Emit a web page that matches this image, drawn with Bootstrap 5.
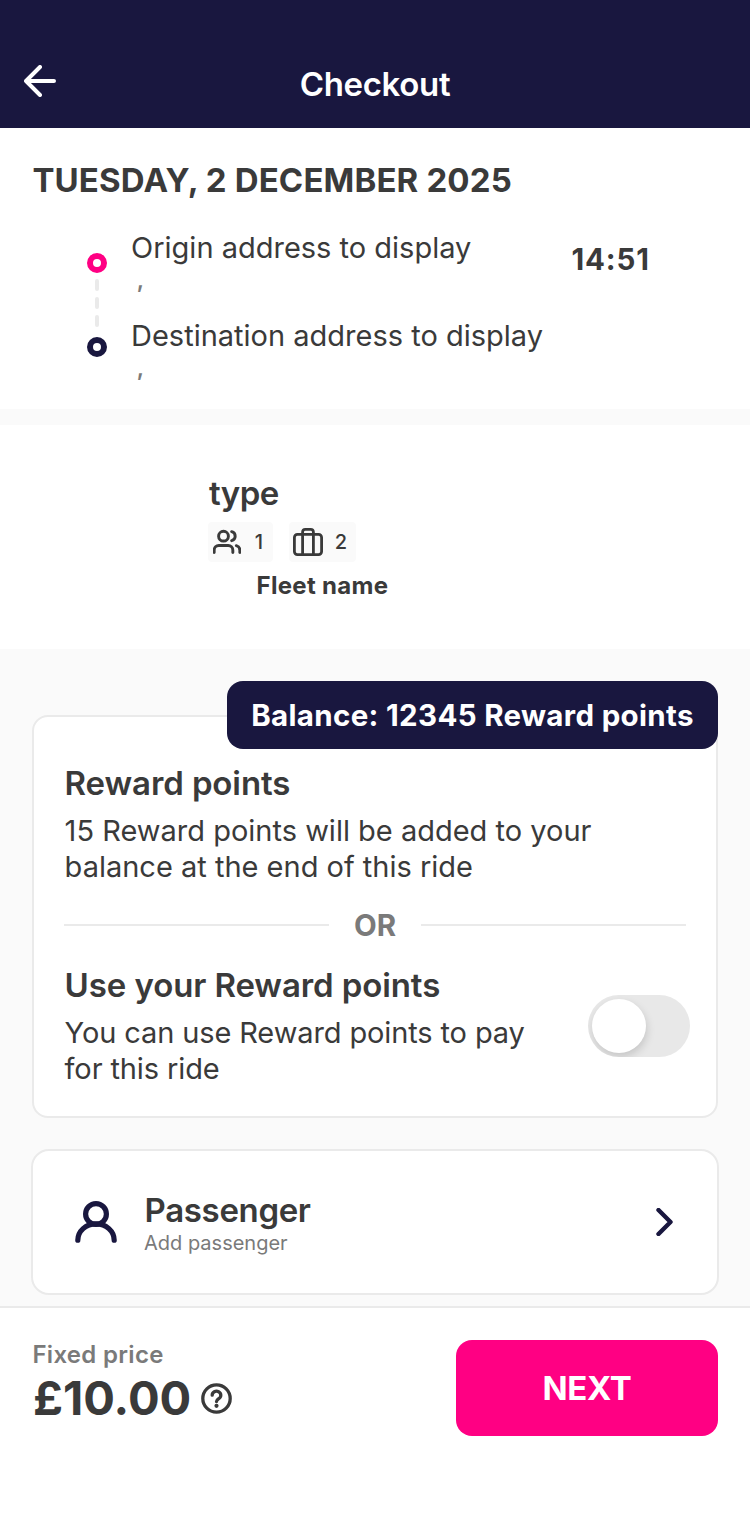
<!DOCTYPE html>
<html lang="en">
<head>
<meta charset="utf-8">
<meta name="viewport" content="width=device-width, initial-scale=1">
<title>Checkout</title>
<link href="https://cdn.jsdelivr.net/npm/bootstrap@5.3.0/dist/css/bootstrap.min.css" rel="stylesheet">
<style>
  :root { --navy: #19173f; --pink: #ff0083; --ink: #3a3a3a; --muted: #7a7a7a; --line: #eaeaea; --soft: #fafafa; }
  body { font-family: Inter, "Liberation Sans", sans-serif; color: var(--ink); background: var(--soft); height: 1536px; overflow: hidden; }
  svg { display: block; flex: none; }
  .topbar { height: 128px; background: var(--navy); padding: 40px 24px 0; display: grid; grid-template-columns: 32px 1fr 32px; }
  .topbar svg { margin-top: 25px; }
  .topbar h1 { font-size: 33px; line-height: 88px; font-weight: 600; letter-spacing: -.35px; }
  .trip { height: 281px; padding: 32px 33px 0; }
  .trip h2 { font-size: 33px; line-height: 40px; font-weight: 700; letter-spacing: .14px; margin: 0 0 0 -.6px; }
  .route { padding: 29px 67px 0 54px; }
  .rail { width: 20px; margin: 24px 24px 0 0; }
  .stops { padding-top: 1px; }
  .address { font-size: 29px; line-height: 36px; }
  .address-sub { font-size: 23px; line-height: 28px; height: 52px; color: var(--muted); white-space: pre; font-weight: 600; }
  .clock { font-size: 29.5px; line-height: 36px; font-weight: 700; letter-spacing: .9px; margin: 12px 0 0; }
  .vehicle { height: 224px; margin-top: 16px; padding: 48px 0 0 208px; }
  .vehicle h3 { font-size: 33px; line-height: 40px; font-weight: 600; letter-spacing: -.5px; padding-left: 1px; }
  .chips { margin-top: 9px; }
  .chip { height: 40px; background: var(--soft); border-radius: 4px; font-size: 20px; font-weight: 500; }
  .chip-seats { width: 65px; padding: 0 10px 0 5px; }
  .chip-bags { width: 67px; padding: 0 9px 0 4px; }
  .fleet { font-size: 24px; line-height: 30px; font-weight: 700; margin: 9px 0 0 48.5px; letter-spacing: .3px; }
  .rewards { margin: 66px 32px 0; height: 403px; border: 2px solid var(--line); border-radius: 16px; padding: 46px 30px 0; }
  .balance { top: -36px; right: -2px; width: 491px; height: 68px; border-radius: 16px; background: var(--navy); font-size: 29.5px; font-weight: 700; line-height: 68px; letter-spacing: .33px; }
  .card-head { font-size: 33px; line-height: 40px; font-weight: 600; letter-spacing: -.1px; padding-left: .6px; }
  .copy { font-size: 29px; line-height: 36px; margin-top: 10px; padding-left: .6px; }
  .copy-tight { letter-spacing: -.12px; }
  .divider { height: 36px; margin: 22px 0; font-size: 29.5px; font-weight: 700; color: var(--muted); }
  .divider i { height: 2px; background: var(--line); width: 265px; }
  .toggle { width: 102px; height: 62px; border-radius: 31px; background: #e8e8e8; padding: 4px; margin: 30px -4px 0 0; overflow: hidden; border: 0; }
  .knob { width: 54px; height: 54px; border-radius: 50%; background: #fff; box-shadow: 1px 4px 8px rgba(0,0,0,.15); }
  .passenger { margin: 31px 31px 0; height: 146px; border: 2px solid var(--line); border-radius: 18px; padding: 0 44.5px 0 42px; }
  .passenger .who { margin-left: 27px; padding-top: 2px; }
  .passenger .card-head { letter-spacing: -.35px; }
  .passenger .sub { font-size: 20px; line-height: 26px; color: var(--muted); }
  .footer { height: 230px; margin-top: 11px; border-top: 2px solid var(--line); padding: 32px 32px 0 33px; }
  .fixed { font-size: 24px; line-height: 30px; font-weight: 600; color: var(--muted); letter-spacing: .3px; margin-left: -.6px; }
  .price { font-size: 47px; line-height: 56px; font-weight: 700; }
  .help { margin-left: 10px; }
  .next { width: 262px; height: 96px; border-radius: 16px; background: var(--pink); color: #fff; font-size: 33px; font-weight: 700; letter-spacing: -.3px; padding: 2px 0 0; }
  .next:hover { background: var(--pink); color: #fff; }
</style>
</head>
<body>
<header class="topbar text-white">
  <svg width="32" height="32" fill="none" stroke="#fff" stroke-width="4" stroke-linecap="round" stroke-linejoin="round"><path d="M16 2 2 16 16 30M2 16H30"/></svg>
  <h1 class="m-0 text-center">Checkout</h1>
</header>
<section class="trip bg-white">
  <h2>TUESDAY, 2 DECEMBER 2025</h2>
  <div class="route d-flex">
    <svg class="rail" width="20" height="106" viewBox="0 0 20 106" fill="none"><circle cx="10" cy="10" r="7" stroke="#ff0083" stroke-width="6"/><path d="M10 28v8M10 46v8M10 64v8" stroke="#eaeaea" stroke-width="4" stroke-linecap="round"/><circle cx="10" cy="94" r="7" stroke="#19173f" stroke-width="6"/></svg>
    <div class="stops flex-grow-1">
      <div class="address">Origin address to display</div>
      <div class="address-sub"> ,</div>
      <div class="address">Destination address to display</div>
      <div class="address-sub"> ,</div>
    </div>
    <div class="clock">14:51</div>
  </div>
</section>
<section class="vehicle bg-white">
  <h3 class="m-0">type</h3>
  <div class="chips d-flex gap-3">
    <div class="chip chip-seats d-flex align-items-center justify-content-between"><svg width="28" height="28" viewBox="0 0 24 24" fill="none" stroke="#3a3a3a" stroke-width="2.5" stroke-linecap="round"><path d="M17 21v-2a4 4 0 0 0-4-4H5a4 4 0 0 0-4 4v2M23 21v-2a4 4 0 0 0-3-3.87M16 3.13a4 4 0 0 1 0 7.75"/><circle cx="9" cy="7" r="4.2"/></svg><span>1</span></div>
    <div class="chip chip-bags d-flex align-items-center justify-content-between"><svg width="30" height="28" fill="none" stroke="#3a3a3a" stroke-width="2.8"><rect x="1.4" y="6.4" width="27.2" height="20.2" rx="3"/><path d="M9.6 26.5V4a2.7 2.7 0 0 1 2.7-2.6h5.4A2.7 2.7 0 0 1 20.4 4v22.5"/></svg><span>2</span></div>
  </div>
  <div class="fleet">Fleet name</div>
</section>
<section class="rewards bg-white position-relative">
  <div class="balance position-absolute text-white text-center">Balance: 12345 Reward points</div>
  <div class="card-head">Reward points</div>
  <div class="copy">15 Reward points will be added to your<br>balance at the end of this ride</div>
  <div class="divider d-flex align-items-center justify-content-between"><i></i><span>OR</span><i></i></div>
  <div class="d-flex justify-content-between">
    <div>
      <div class="card-head">Use your Reward points</div>
      <div class="copy copy-tight">You can use Reward points to pay<br>for this ride</div>
    </div>
    <button type="button" role="switch" aria-checked="false" class="toggle" aria-label="Use your Reward points"><span class="knob d-block"></span></button>
  </div>
</section>
<section class="passenger bg-white d-flex align-items-center">
  <svg width="42" height="42" fill="none" stroke="#19173f" stroke-width="5.2" stroke-linecap="round"><circle cx="21" cy="13" r="10.4"/><path d="M2.8 39.2a18.2 16.4 0 0 1 36.4 0"/></svg>
  <div class="who flex-grow-1">
    <div class="card-head">Passenger</div>
    <div class="sub">Add passenger</div>
  </div>
  <svg width="17" height="28" fill="none" stroke="#19173f" stroke-width="4.4" stroke-linecap="round" stroke-linejoin="round"><path d="m2.5 2 12 12-12 12"/></svg>
</section>
<footer class="footer bg-white d-flex justify-content-between">
  <div>
    <div class="fixed">Fixed price</div>
    <div class="d-flex align-items-center">
      <div class="price">£10.00</div>
      <svg class="help" width="31" height="31" viewBox="0 0 31 31" fill="none" stroke="#3a3a3a" stroke-width="3.3"><circle cx="15.5" cy="15.5" r="13.7"/><path d="M11.2 12.2a4.3 4 0 1 1 6.6 3.4c-1.5 1-2.3 1.5-2.3 3" stroke-linecap="round"/><circle cx="15.5" cy="22.8" r="2.1" fill="#3a3a3a" stroke="none"/></svg>
    </div>
  </div>
  <button type="button" class="next btn">NEXT</button>
</footer>
<script src="https://cdn.jsdelivr.net/npm/bootstrap@5.3.0/dist/js/bootstrap.bundle.min.js"></script>
</body>
</html>
